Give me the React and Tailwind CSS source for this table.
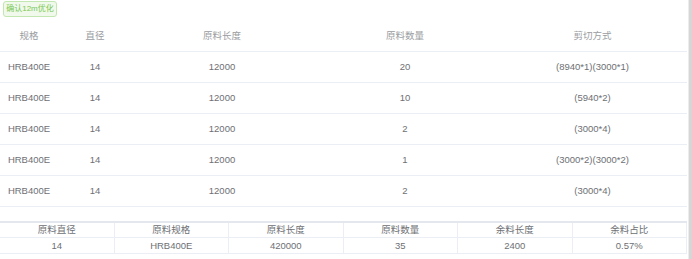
const rows = [
  { spec: "HRB400E", dia: "14", len: "12000", qty: "20", cut: "(8940*1)(3000*1)" },
  { spec: "HRB400E", dia: "14", len: "12000", qty: "10", cut: "(5940*2)" },
  { spec: "HRB400E", dia: "14", len: "12000", qty: "2", cut: "(3000*4)" },
  { spec: "HRB400E", dia: "14", len: "12000", qty: "1", cut: "(3000*2)(3000*2)" },
  { spec: "HRB400E", dia: "14", len: "12000", qty: "2", cut: "(3000*4)" },
];

const summaryHead = ["原料直径", "原料规格", "原料长度", "原料数量", "余料长度", "余料占比"];
const summaryRow = ["14", "HRB400E", "420000", "35", "2400", "0.57%"];

const cols = "grid grid-cols-[58px_74px_180px_186px_1fr]";

export default function App() {
  return (
    <div
      className="w-[692px] h-[259px] bg-white flex overflow-hidden leading-none"
      style={{ fontFamily: '"Liberation Sans", Arial, "Noto Sans CJK SC", sans-serif' }}
    >
      <div className="flex-1 flex flex-col">
        <div className="flex pt-[1px] pl-[3px]">
          <button className="h-[16px] w-[54px] text-[8px] leading-none text-[#7ac853] bg-[#f0f9eb] border border-[#c2e7b0] rounded-[3px]">
            确认12m优化
          </button>
        </div>

        {/* main table */}
        <div className="mt-[3px] mr-[1px]">
          <div className={`${cols} h-[32px] items-center border-b border-[#ebeef5] text-[9.5px] text-[#9a9ca1]`}>
            <div className="text-center">规格</div>
            <div className="text-center">直径</div>
            <div className="text-center">原料长度</div>
            <div className="text-center">原料数量</div>
            <div className="text-center">剪切方式</div>
          </div>
          {rows.map((r, i) => (
            <div
              key={i}
              className={`${cols} h-[31px] items-center border-b border-[#ebeef5] text-[9.5px] text-[#6e7074]`}
            >
              <div className="text-center">{r.spec}</div>
              <div className="text-center">{r.dia}</div>
              <div className="text-center">{r.len}</div>
              <div className="text-center">{r.qty}</div>
              <div className="text-center">{r.cut}</div>
            </div>
          ))}
        </div>

        {/* summary table */}
        <div className="mt-[14px] mr-[1px] border-t-2 border-[#e4e7ed] text-[9.5px] text-[#6e7074]">
          <div className="grid grid-cols-6 h-[15px] items-center border-b border-[#ebeef5]">
            {summaryHead.map((h, i) => (
              <div key={i} className="h-full flex items-center justify-center border-r border-[#ebeef5]">
                {h}
              </div>
            ))}
          </div>
          <div className="grid grid-cols-6 h-[16px] items-center border-b border-[#ebeef5]">
            {summaryRow.map((v, i) => (
              <div key={i} className="h-full flex items-center justify-center border-r border-[#ebeef5]">
                {v}
              </div>
            ))}
          </div>
        </div>
      </div>

      {/* right edge strip */}
      <div className="w-[4px] flex">
        <div className="w-[1px] bg-[#ececec]" />
        <div className="w-[3px] bg-[#d6d6d6]" />
      </div>
    </div>
  );
}
